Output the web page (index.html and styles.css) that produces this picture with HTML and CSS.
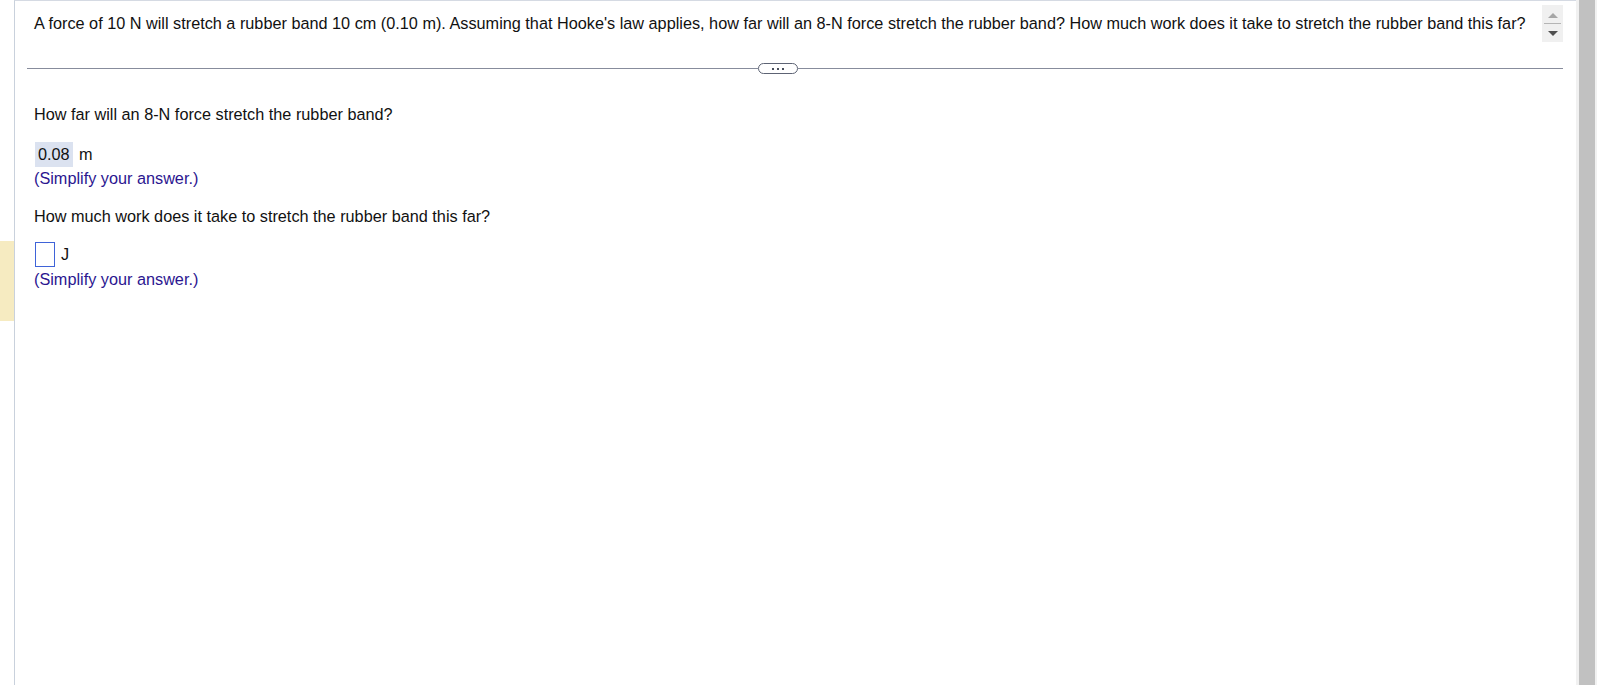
FILE: index.html
```html
<!DOCTYPE html>
<html>
<head>
<meta charset="utf-8">
<link rel="stylesheet" href="styles.css">
</head>
<body>
<div class="page">
  <div class="gutter"><div class="marker"></div></div>
  <div class="main">
    <div class="question-row">
      <p class="question">A force of 10 N will stretch a rubber band 10 cm (0.10 m). Assuming that Hooke's law applies, how far will an 8-N force stretch the rubber band? How much work does it take to stretch the rubber band this far?</p>
      <div class="spin">
        <span class="tri up"></span>
        <span class="sep"></span>
        <span class="tri down"></span>
      </div>
    </div>
    <div class="divider">
      <span class="line left"></span>
      <span class="pill"><i></i><i></i><i></i></span>
      <span class="line right"></span>
    </div>
    <div class="answers">
      <p class="prompt first">How far will an 8-N force stretch the rubber band?</p>
      <div class="answer-row"><span class="filled">0.08</span><span class="unit">m</span></div>
      <p class="hint">(Simplify your answer.)</p>
      <p class="prompt second">How much work does it take to stretch the rubber band this far?</p>
      <div class="answer-row empty-row"><span class="empty"></span><span class="unit">J</span></div>
      <p class="hint">(Simplify your answer.)</p>
    </div>
  </div>
  <div class="scrollbar"><div class="thumb"></div></div>
</div>
</body>
</html>
```

FILE: styles.css
```css
html, body {
  margin: 0;
  padding: 0;
  background: #ffffff;
}
body {
  font-family: "Liberation Sans", Arial, sans-serif;
  font-size: 16.25px;
  color: #111;
}
.page {
  display: flex;
  height: 685px;
}
.gutter {
  width: 14px;
  flex: none;
  padding-top: 241px;
  box-sizing: border-box;
}
.marker {
  width: 14px;
  height: 80px;
  background: #f6ebc1;
}
.main {
  flex: 1;
  border-left: 1px solid #c9d1dc;
  border-top: 1px solid #d5dae3;
  min-width: 0;
}
.question-row {
  display: flex;
  align-items: flex-start;
  padding: 4px 13px 0 19px;
}
.question {
  flex: 1;
  margin: 9px 0 0 0;
  line-height: 18px;
  white-space: nowrap;
}
.spin {
  width: 21px;
  height: 37px;
  background: #f0f0f0;
  display: flex;
  flex-direction: column;
  align-items: center;
  box-sizing: border-box;
  padding-top: 8px;
}
.tri {
  width: 0;
  height: 0;
  border-left: 5px solid transparent;
  border-right: 5px solid transparent;
}
.tri.up {
  border-bottom: 5px solid #a6a6a6;
}
.tri.down {
  border-top: 5px solid #4f4f4f;
}
.sep {
  width: 17px;
  height: 1px;
  background: #b5b5b5;
  margin: 5px 0 7px;
}
.divider {
  display: flex;
  align-items: center;
  height: 11px;
  margin: 21px 13px 0 12px;
}
.line {
  height: 1px;
  background: #878c9c;
}
.line.left {
  width: 731px;
}
.line.right {
  flex: 1;
}
.pill {
  width: 40px;
  height: 11px;
  box-sizing: border-box;
  border: 1px solid #5d6374;
  border-radius: 6px;
  display: flex;
  justify-content: center;
  align-items: center;
  gap: 3px;
}
.pill i {
  width: 2px;
  height: 2px;
  background: #4a4f5c;
  display: block;
}
.answers {
  padding-left: 19px;
}
.answers p {
  margin: 0;
  line-height: 18px;
}
.prompt.first {
  margin-top: 31px;
}
.prompt.second {
  margin-top: 20px;
}
.answer-row {
  display: flex;
  align-items: center;
  height: 25px;
  margin-top: 19px;
  margin-left: 1px;
}
.empty-row {
  margin-top: 17px;
}
.filled {
  background: #dbe2f0;
  height: 25px;
  line-height: 25px;
  padding: 0 3px;
  width: 38px;
  box-sizing: border-box;
}
.empty {
  width: 20px;
  height: 25px;
  box-sizing: border-box;
  border: 1px solid #3f63d8;
}
.unit {
  margin-left: 6px;
}
.hint {
  color: #2b1690;
  margin-top: 2px !important;
}
.empty-row + .hint {
  margin-top: 3px !important;
}
.scrollbar {
  width: 21px;
  flex: none;
  background: #f1f1f1;
  padding: 0 2px 0 3px;
  box-sizing: border-box;
}
.thumb {
  height: 100%;
  background: #c1c1c1;
}
```
